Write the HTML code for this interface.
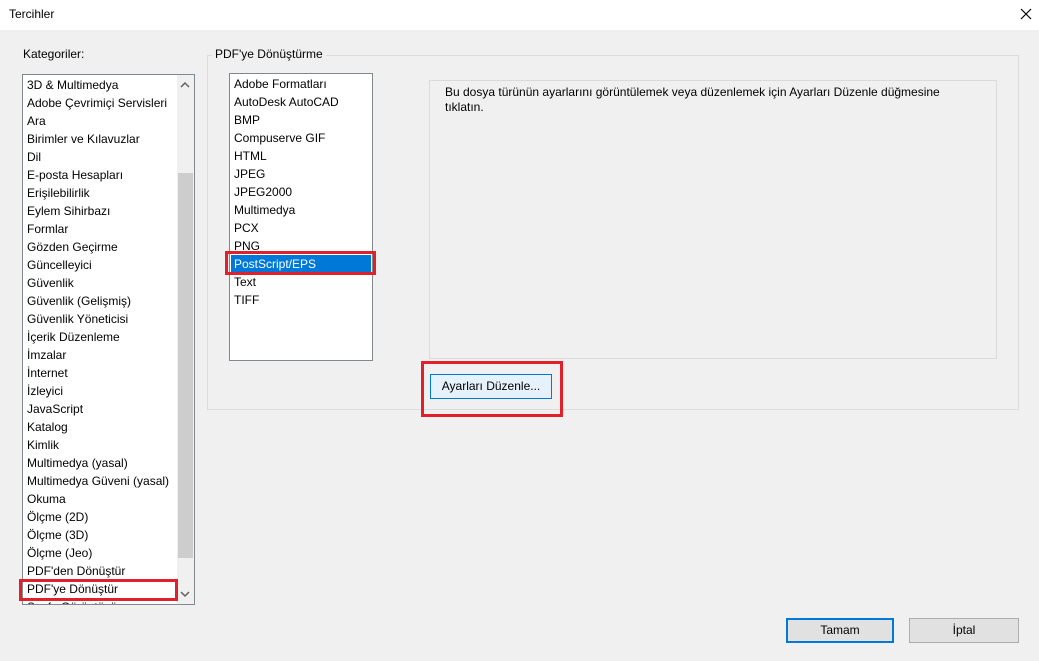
<!DOCTYPE html>
<html><head><meta charset="utf-8"><style>
*{box-sizing:border-box;margin:0;padding:0}
body{width:1039px;height:661px;background:#f0f0f0;font-family:"Segoe UI","Liberation Sans","DejaVu Sans",sans-serif;font-size:12px;color:#000;position:relative;overflow:hidden}
.a{position:absolute}
.title{left:0;top:0;width:1039px;height:30px;background:#fff}
.list{background:#fff;border:1px solid #828790;overflow:hidden}
.item{position:absolute;left:4px;height:18px;line-height:18px;white-space:nowrap}
.red{border:3px solid #e0202a}
.btn{background:#e1e1e1;border:1px solid #adadad;text-align:center;line-height:22px}
</style></head><body>
<div class="a title"><span class="a" style="left:9px;top:7px">Tercihler</span>
<svg class="a" style="left:1020px;top:8px" width="12" height="12"><path d="M1 1L11 11M11 1L1 11" stroke="#000" stroke-width="1.2"/></svg></div>
<div class="a" style="left:23px;top:47px">Kategoriler:</div>
<div class="a list" style="left:22px;top:74px;width:173px;height:531px">
<div class="a" style="left:154px;top:0;width:17px;height:529px;background:#f0f0f0"></div>
<div class="a" style="left:155px;top:98px;width:15px;height:385px;background:#cdcdcd"></div>
<svg class="a" style="left:157px;top:6px" width="10" height="8"><path d="M1 6L5 2L9 6" stroke="#606060" stroke-width="1.5" fill="none"/></svg>
<svg class="a" style="left:157px;top:515px" width="10" height="8"><path d="M1 2L5 6L9 2" stroke="#606060" stroke-width="1.5" fill="none"/></svg>
<div id="L"></div>
</div>
<div class="a red" style="left:19px;top:579px;width:159px;height:22px"></div>
<div class="a" style="left:207px;top:55px;width:812px;height:355px;border:1px solid #dcdcdc"></div>
<div class="a" style="left:212px;top:47px;background:#f0f0f0;padding:0 3px">PDF'ye Dönüştürme</div>
<div class="a list" style="left:229px;top:73px;width:144px;height:288px">
<div class="a" style="left:1px;top:181px;width:140px;height:19px;background:#0078d7"></div>
<div id="R"></div>
</div>
<div class="a red" style="left:225px;top:251px;width:151px;height:24px"></div>
<div class="a" style="left:429px;top:80px;width:568px;height:279px;border:1px solid #dadada"></div>
<div class="a" style="left:445px;top:85px;width:520px;line-height:15px">Bu dosya türünün ayarlarını görüntülemek veya düzenlemek için Ayarları Düzenle düğmesine tıklatın.</div>
<div class="a btn" style="left:430px;top:374px;width:122px;height:25px;background:#e5f1fb;border-color:#0078d7">Ayarları Düzenle...</div>
<div class="a red" style="left:421px;top:361px;width:142px;height:56px"></div>
<div class="a btn" style="left:786px;top:618px;width:108px;height:25px;border:2px solid #0078d7;line-height:21px">Tamam</div>
<div class="a btn" style="left:909px;top:618px;width:110px;height:25px">İptal</div>
<script>
var l=["3D & Multimedya","Adobe Çevrimiçi Servisleri","Ara","Birimler ve Kılavuzlar","Dil","E-posta Hesapları","Erişilebilirlik","Eylem Sihirbazı","Formlar","Gözden Geçirme","Güncelleyici","Güvenlik","Güvenlik (Gelişmiş)","Güvenlik Yöneticisi","İçerik Düzenleme","İmzalar","İnternet","İzleyici","JavaScript","Katalog","Kimlik","Multimedya (yasal)","Multimedya Güveni (yasal)","Okuma","Ölçme (2D)","Ölçme (3D)","Ölçme (Jeo)","PDF'den Dönüştür","PDF'ye Dönüştür","Sayfa Görüntüsü"];
var h="";l.forEach(function(t,i){h+='<div class="item" style="top:'+(1+i*18)+'px">'+t.replace('&','&amp;')+'</div>'});document.getElementById('L').innerHTML=h;
var r=["Adobe Formatları","AutoDesk AutoCAD","BMP","Compuserve GIF","HTML","JPEG","JPEG2000","Multimedya","PCX","PNG","PostScript/EPS","Text","TIFF"];
h="";r.forEach(function(t,i){h+='<div class="item" style="top:'+(1+i*18)+'px;'+(i==10?'color:#fff':'')+'">'+t+'</div>'});document.getElementById('R').innerHTML=h;
</script>
</body></html>
